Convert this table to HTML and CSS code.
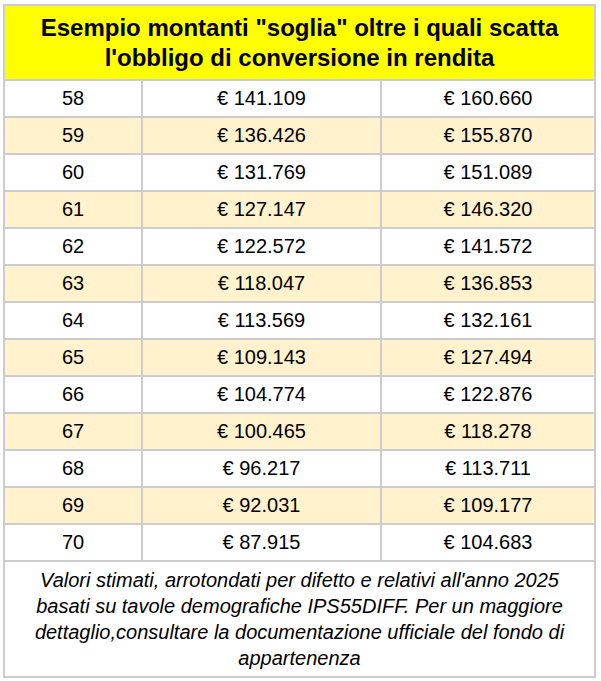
FILE: index.html
```html
<!DOCTYPE html>
<html lang="it">
<head>
<meta charset="utf-8">
<title>Montanti soglia</title>
<link rel="stylesheet" href="styles.css">
</head>
<body>
<table class="tbl">
  <colgroup>
    <col class="c1"><col class="c2"><col class="c3">
  </colgroup>
  <thead>
    <tr><th colspan="3" class="head">Esempio montanti "soglia" oltre i quali scatta l'obbligo di conversione in rendita</th></tr>
  </thead>
  <tbody>
    <tr><td>58</td><td>€ 141.109</td><td>€ 160.660</td></tr>
    <tr class="alt"><td>59</td><td>€ 136.426</td><td>€ 155.870</td></tr>
    <tr><td>60</td><td>€ 131.769</td><td>€ 151.089</td></tr>
    <tr class="alt"><td>61</td><td>€ 127.147</td><td>€ 146.320</td></tr>
    <tr><td>62</td><td>€ 122.572</td><td>€ 141.572</td></tr>
    <tr class="alt"><td>63</td><td>€ 118.047</td><td>€ 136.853</td></tr>
    <tr><td>64</td><td>€ 113.569</td><td>€ 132.161</td></tr>
    <tr class="alt"><td>65</td><td>€ 109.143</td><td>€ 127.494</td></tr>
    <tr><td>66</td><td>€ 104.774</td><td>€ 122.876</td></tr>
    <tr class="alt"><td>67</td><td>€ 100.465</td><td>€ 118.278</td></tr>
    <tr><td>68</td><td>€ 96.217</td><td>€ 113.711</td></tr>
    <tr class="alt"><td>69</td><td>€ 92.031</td><td>€ 109.177</td></tr>
    <tr><td>70</td><td>€ 87.915</td><td>€ 104.683</td></tr>
    <tr><td colspan="3" class="note">Valori stimati, arrotondati per difetto e relativi all'anno 2025 basati su tavole demografiche IPS55DIFF. Per un maggiore dettaglio,consultare la documentazione ufficiale del fondo di appartenenza</td></tr>
  </tbody>
</table>
</body>
</html>
```
FILE: styles.css
```css
html, body {
  margin: 0;
  padding: 0;
  background: #ffffff;
}
body {
  padding: 4px 0 0 3px;
  font-family: "Liberation Sans", Arial, sans-serif;
  color: #000000;
}
.tbl {
  border-collapse: collapse;
  width: 591px;
  table-layout: fixed;
  border: 2px solid #cccccc;
}
.c1 { width: 138px; }
.c2 { width: 239px; }
.c3 { width: 214px; }
.tbl th, .tbl td {
  border: 2px solid #cccccc;
  text-align: center;
  padding: 0;
}
.head {
  background: #ffff00;
  font-weight: bold;
  font-size: 24px;
  line-height: 30px;
  height: 73px;
  padding: 0 2px;
}
.tbl td {
  font-size: 20px;
  height: 35px;
  line-height: 23px;
}
.tbl tr.alt td {
  background: #fff2cc;
}
.tbl td.note {
  font-style: italic;
  font-size: 20px;
  line-height: 26px;
  height: 114px;
  padding: 0 12px;
}
```
